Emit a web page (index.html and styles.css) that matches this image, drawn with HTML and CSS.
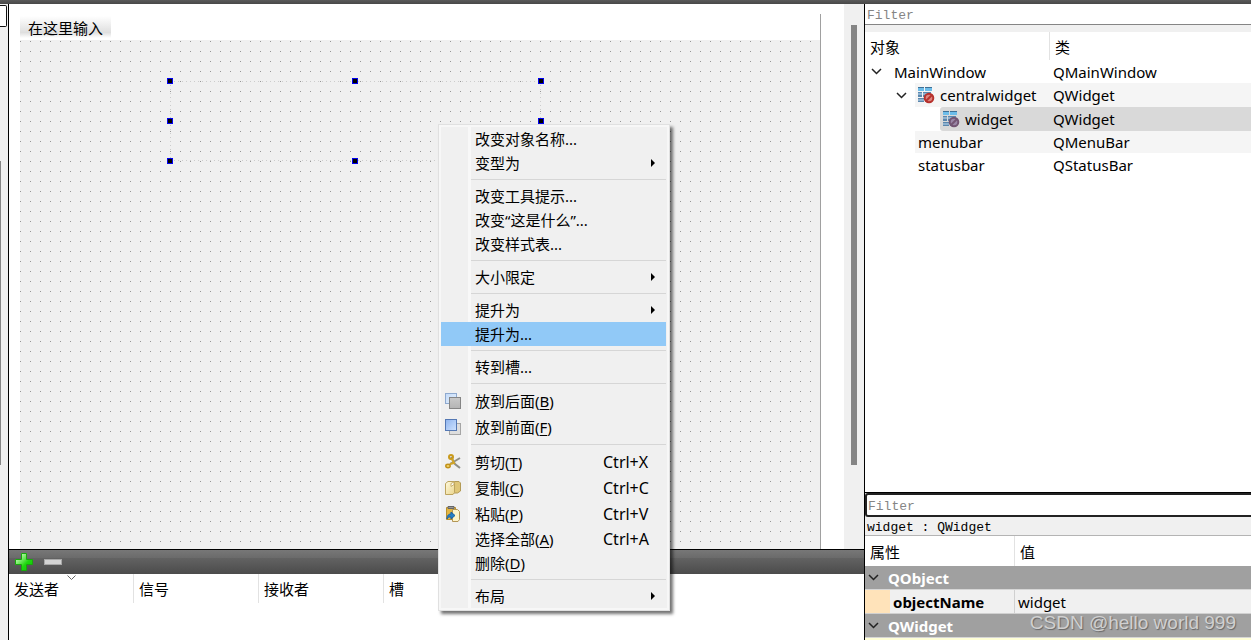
FILE: index.html
```html
<!DOCTYPE html>
<html lang="zh-CN">
<head>
<meta charset="utf-8">
<title>Qt Designer</title>
<link rel="stylesheet" href="styles.css">
</head>
<body>
<svg class="defs" aria-hidden="true">
  <defs>
    <linearGradient id="blue" x1="0" y1="0" x2="1" y2="1"><stop offset="0" stop-color="#8fb4ee"/><stop offset="1" stop-color="#cfe3ff"/></linearGradient>
    <linearGradient id="pale" x1="0" y1="0" x2="1" y2="1"><stop offset="0" stop-color="#c3daf8"/><stop offset="1" stop-color="#e6f1fd"/></linearGradient>
    <linearGradient id="gray" x1="0" y1="0" x2="0" y2="1"><stop offset="0" stop-color="#c9c9c9"/><stop offset="1" stop-color="#b4b4b4"/></linearGradient>
    <linearGradient id="green" x1="0" y1="0" x2="1" y2="1"><stop offset="0.2" stop-color="#b4f7a4"/><stop offset="0.6" stop-color="#1fd80f"/><stop offset="1" stop-color="#08c400"/></linearGradient>
    <linearGradient id="paper" x1="0" y1="0" x2="1" y2="1"><stop offset="0" stop-color="#fffbe0"/><stop offset="1" stop-color="#ead48c"/></linearGradient>
    <symbol id="chev" viewBox="0 0 11 7"><path d="M1 1l4.500 4.500L10 1" fill="none" stroke="#222" stroke-width="1.500"/></symbol>
    <symbol id="layout" viewBox="0 0 17 17">
      <path d="M0 0h6v4H0zM7 0h7v4H7zM0 5h4v5H0zM5 5h8v5H5zM0 11h6v4H0zM7 11h6v4H7z" fill="#5b87ad"/>
      <path d="M0 1h6v3H0zM7 1h7v3H7z" fill="#6dbdea"/>
      <path d="M0 0h6v1H0zM7 0h7v1H7z" fill="#3f7096"/>
      <path d="M0 6h4v2H0zM5 6h8v2H5zM0 12h6v2H0z" fill="#8fb2d0"/>
    </symbol>
  </defs>
</svg>
<div class="strip"></div>
<div class="workspace">
  <aside class="left-dock"><div class="left-box"></div><div class="left-edge"></div></aside>
  <main class="center">
    <section class="canvas">
      <div class="form">
        <nav class="menubar"><button class="menubar-item">在这里输入</button></nav>
        <div class="grid">
          <div class="selection">
            <i class="handle tl"></i><i class="handle tc"></i><i class="handle tr"></i>
            <i class="handle ml"></i><i class="handle mr"></i>
            <i class="handle bl"></i><i class="handle bc"></i><i class="handle br"></i>
          </div>
        </div>
      </div>
      <div class="scroll"><div class="thumb"></div></div>
    </section>
    <section class="signals">
      <div class="toolbar">
        <button class="tool" aria-label="添加"><svg width="18" height="18" viewBox="0 0 18 18"><path d="M6.500.500h5v6h6v5h-6v6h-5v-6h-6v-5h6z" fill="url(#green)" stroke="#18a80c"/></svg></button>
        <button class="tool" aria-label="删除"><svg width="20" height="18" viewBox="0 0 20 18"><rect x="1.500" y="6.500" width="17" height="5" fill="#d4d4d4" stroke="#a8a8a8"/></svg></button>
      </div>
      <table class="signal-table">
        <thead><tr><th>发送者<svg class="sort" width="9" height="6" viewBox="0 0 9 6"><path d="M.500.500l4 4 4-4" fill="none" stroke="#666"/></svg></th><th>信号</th><th>接收者</th><th>槽</th></tr></thead>
      </table>
    </section>
  </main>
  <aside class="right-dock">
    <section class="inspector">
      <input class="filter" type="text" placeholder="Filter" aria-label="筛选对象">
      <table class="tree">
        <thead><tr><th>对象</th><th class="second">类</th></tr></thead>
        <tbody>
          <tr><td><div class="node"><svg class="chev" width="11" height="7"><use href="#chev"/></svg><span>MainWindow</span></div></td><td>QMainWindow</td></tr>
          <tr class="alt tall"><td><div class="node level1"><svg class="chev" width="11" height="7"><use href="#chev"/></svg><div class="label"><svg width="17" height="17" viewBox="0 0 17 17"><use href="#layout"/><circle cx="11" cy="11" r="4.300" fill="#dc8580" stroke="#b7312c" stroke-width="2"/><path d="M8 14l6-6" stroke="#b7312c" stroke-width="2"/></svg>centralwidget</div></div></td><td>QWidget</td></tr>
          <tr class="selected tall"><td><div class="node level2"><div class="label"><svg width="17" height="17" viewBox="0 0 17 17"><use href="#layout"/><circle cx="11" cy="11" r="4.300" fill="#9a87a6" stroke="#735573" stroke-width="2"/><path d="M8 14l6-6" stroke="#735573" stroke-width="2"/></svg>widget</div></div></td><td>QWidget</td></tr>
          <tr class="alt short"><td><div class="node leaf"><div class="label">menubar</div></div></td><td>QMenuBar</td></tr>
          <tr><td><div class="node leaf"><div class="label">statusbar</div></div></td><td>QStatusBar</td></tr>
        </tbody>
      </table>
    </section>
    <section class="properties">
      <input class="filter framed" type="text" placeholder="Filter" aria-label="筛选属性">
      <div class="object-path">widget : QWidget</div>
      <table class="props">
        <thead><tr><th>属性</th><th class="second">值</th></tr></thead>
        <tbody>
          <tr class="group"><th colspan="2"><svg class="chev" width="11" height="7"><use href="#chev"/></svg>QObject</th></tr>
          <tr class="prop"><th>objectName</th><td>widget</td></tr>
          <tr class="group"><th colspan="2"><svg class="chev" width="11" height="7"><use href="#chev"/></svg>QWidget</th></tr>
          <tr class="yellow"><td></td><td></td></tr>
        </tbody>
      </table>
    </section>
  </aside>
</div>
<ul class="menu">
  <li><button>改变对象名称...</button></li>
  <li><button>变型为<i class="arrow"></i></button></li>
  <li class="sep"></li>
  <li><button>改变工具提示...</button></li>
  <li><button>改变“这是什么”...</button></li>
  <li><button>改变样式表...</button></li>
  <li class="sep"></li>
  <li><button>大小限定<i class="arrow"></i></button></li>
  <li class="sep"></li>
  <li><button>提升为<i class="arrow"></i></button></li>
  <li><button class="active">提升为...</button></li>
  <li class="sep"></li>
  <li><button>转到槽...</button></li>
  <li class="sep"></li>
  <li><button class="with-icon"><svg class="icon" width="16" height="16" viewBox="0 0 16 16"><rect x=".500" y=".500" width="11" height="10" fill="url(#pale)" stroke="#8ea9cf"/><rect x="4.500" y="4.500" width="11" height="11" fill="url(#gray)" stroke="#858585"/></svg><span>放到后面(<u>B</u>)</span></button></li>
  <li><button class="with-icon"><svg class="icon" width="16" height="16" viewBox="0 0 16 16"><rect x="4.500" y="4.500" width="11" height="11" fill="#dedede" stroke="#a5a5a5"/><rect x=".500" y=".500" width="11" height="11" fill="url(#blue)" stroke="#5478b4"/></svg><span>放到前面(<u>F</u>)</span></button></li>
  <li class="sep"></li>
  <li><button class="with-icon"><svg class="icon" width="16" height="16" viewBox="0 0 16 16"><path d="M6 3l4 7 5 4M5 10l10-6" fill="none" stroke="#8f8f86" stroke-width="2"/><circle cx="6" cy="3" r="2" fill="none" stroke="#c99a1c" stroke-width="2"/><path d="M7 5l2 4-4 1" fill="none" stroke="#d2a526" stroke-width="2"/><ellipse cx="3" cy="12" rx="2.200" ry="1.700" fill="#f0d26a" stroke="#c2921a" stroke-width="1.500"/></svg><span>剪切(<u>T</u>)</span><span class="key">Ctrl+X</span></button></li>
  <li><button class="with-icon"><svg class="icon" width="16" height="16" viewBox="0 0 16 16"><path d="M7 1.500h7l1.500 1.500v8l-3 2H7z" fill="#dfc677" stroke="#b39a55"/><path d="M.500 3.500L3 1.500h6.500v11l-1.500 2H.500z" fill="url(#paper)" stroke="#bda45e"/><path d="M6 3.500v3l3-2v-2.500z" fill="#fff" stroke="#c9b06a"/></svg><span>复制(<u>C</u>)</span><span class="key">Ctrl+C</span></button></li>
  <li><button class="with-icon"><svg class="icon" width="16" height="16" viewBox="0 0 16 16"><path d="M1.500 1.500h9v12h-9z" fill="#e3b642" stroke="#b98f2c"/><path d="M3 .500h6v2H3z" fill="#999" stroke="#666"/><path d="M7.500 3.500h5l2 2v8l-1.500 2H7.500z" fill="#fff4c9" stroke="#b39655"/><path d="M2 13c0-4 2-5 4-5V6l4 3.500L6 13v-2c-2 0-3 0-4 2z" fill="#277fc6" stroke="#1d62a0"/></svg><span>粘贴(<u>P</u>)</span><span class="key">Ctrl+V</span></button></li>
  <li><button><span>选择全部(<u>A</u>)</span><span class="key">Ctrl+A</span></button></li>
  <li><button><span>删除(<u>D</u>)</span></button></li>
  <li class="sep"></li>
  <li><button>布局<i class="arrow"></i></button></li>
</ul>
<div class="watermark">CSDN @hello world 999</div>
</body>
</html>
```
FILE: styles.css
```css
* { box-sizing: border-box; }
body {
  margin: 0;
  height: 100vh;
  display: flex;
  flex-direction: column;
  overflow: hidden;
  position: relative;
  background: #fff;
  color: #000;
  font-family: "Noto Sans", "Noto Sans CJK SC", sans-serif;
  font-size: 15px;
  line-height: 20px;
}
button, input { font: inherit; color: inherit; border: 0; padding: 0; background: none; }
table { border-collapse: separate; border-spacing: 0; table-layout: fixed; width: 100%; }
th, td { padding: 0; text-align: left; font-weight: 400; }
svg { display: block; }
.defs { position: absolute; width: 0; height: 0; }
.strip { flex: none; height: 4px; background: linear-gradient(#5a5a5a, #484848); }
.workspace { flex: 1; min-height: 0; display: flex; }

.left-dock { width: 9px; background: #f0f0f0; border-right: 1px solid #000; display: flex; flex-direction: column; }
.left-box { width: 7px; height: 22px; margin-top: 1px; background: #fff; border: 1px solid #111; border-left: 0; border-radius: 0 2px 2px 0; }
.left-edge { width: 1px; height: 304px; margin-top: 134px; background: #858585; }

.center { flex: 1; min-width: 0; display: flex; flex-direction: column; }
.canvas { flex: 1; display: flex; min-height: 0; padding-left: 11px; }
.form { flex: 1; margin: 10px 23px 0 0; border-right: 1px solid #a0a0a0; display: flex; flex-direction: column; }
.menubar { height: 26px; padding-top: 2px; }
.menubar-item { height: 22px; padding: 1px 8px 0; line-height: 18px; background: linear-gradient(#fff, #dfdfdf 75%, #fff); }
.grid {
  flex: 1;
  position: relative;
  background-color: #969696;
  background-image: linear-gradient(90deg, transparent 1px, #f0f0f0 1px), linear-gradient(transparent 1px, #f0f0f0 1px);
  background-size: 10px 10px;
  background-position: 0 1px;
}
.selection {
  position: absolute;
  left: 150px;
  top: 41px;
  width: 371px;
  height: 80px;
  background:
    repeating-linear-gradient(90deg, #ccc 0 1px, transparent 1px 4px) 0 0 / 100% 1px no-repeat,
    repeating-linear-gradient(90deg, #ccc 0 1px, transparent 1px 4px) 0 100% / 100% 1px no-repeat,
    repeating-linear-gradient(#ccc 0 1px, transparent 1px 4px) 0 0 / 1px 100% no-repeat,
    repeating-linear-gradient(#ccc 0 1px, transparent 1px 4px) 100% 0 / 1px 100% no-repeat;
}
.handle { position: absolute; width: 6px; height: 6px; background: #000; border: 1px solid #0000f0; }
.tl, .tc, .tr { top: -3px; }
.ml, .mr { top: 37px; }
.bl, .bc, .br { bottom: -3px; }
.tl, .ml, .bl { left: -3px; }
.tc, .bc { left: 182px; }
.tr, .mr, .br { right: -3px; }
.scroll { width: 20px; background: #f0f0f0; padding: 21px 7px 0; }
.thumb { height: 440px; background: #858585; }

.signals { height: 91px; border-top: 1px solid #000; }
.toolbar { height: 24px; padding-left: 6px; display: flex; align-items: center; gap: 10px; background: linear-gradient(#777, #6a6a6a 35%, #626262 35%, #4b4b4b); }
.signal-table th { width: 125px; height: 29px; padding: 0 0 0 5px; border-right: 1px solid #e2e2e2; position: relative; }
.signal-table th:last-child { width: auto; border-right: 0; }
.sort { position: absolute; left: 58px; top: 1px; }

.right-dock { width: 387px; border-left: 1px solid #000; display: flex; flex-direction: column; background: #f0f0f0; }
.inspector { flex: 1; background: #fff; }
.filter { display: block; width: 100%; height: 21px; padding: 2px 2px 0; background: #fff; border-bottom: 1px solid #858585; font-family: "Liberation Mono", monospace; font-size: 13px; line-height: 18px; }
.filter::placeholder { color: #858585; opacity: 1; }
.tree { border-top: 7px solid #f0f0f0; }
.tree thead th { height: 28px; padding: 2px 0 0 5px; width: 185px; border-right: 1px solid #e2e2e2; }
.tree thead .second { width: auto; border: 0; }
.tree td { height: 23px; }
.tree .tall td { height: 24px; }
.tree .short td { height: 22px; }
.tree td:last-child { padding-left: 3px; }
.node { height: 23px; padding-left: 6px; display: flex; align-items: center; gap: 12px; }
.tall .node { height: 24px; }
.short .node { height: 22px; }
.label { flex: 1; align-self: stretch; display: flex; align-items: center; gap: 5px; padding-left: 3px; }
.level1 { padding-left: 31px; gap: 8px; }
.level2 { padding-left: 75px; }
.leaf { padding-left: 50px; }
.alt .label, .alt td:last-child { background: #f5f5f5; }
.selected .label, .selected td:last-child { background: #d9d9d9; }
.selected .label { border-radius: 3px 0 0 3px; }

.properties { flex: none; height: 148px; border-top: 1px solid #000; }
.framed { height: 24px; border: 2px solid #222; border-right: 0; border-radius: 3px 0 0 3px; padding: 2px 1px 0; }
.object-path { height: 19px; padding: 0 2px; border-bottom: 1px solid #b4b4b4; font-family: "Liberation Mono", monospace; font-size: 13px; line-height: 21px; }
.props { background: #fff; }
.props thead th { height: 30px; padding: 2px 0 0 5px; width: 150px; border-right: 1px solid #e2e2e2; }
.props thead .second { width: auto; border: 0; }
.group th { height: 24px; background: #a0a0a0; color: #fff; font-weight: 700; border-bottom: 1px solid #d6d6d6; }
.group .chev { display: inline-block; margin: 0 9px 3px 3px; }
.prop th { height: 24px; padding-left: 28px; font-weight: 700; background: linear-gradient(90deg, #ffe3ba 25px, #f0f0f0 25px); border-right: 1px solid #d0d0d0; border-bottom: 1px solid #d0d0d0; }
.prop td { padding-left: 3px; background: #f0f0f0; border-bottom: 1px solid #d0d0d0; }
.yellow td { height: 3px; background: #ffffd6; }

.menu {
  position: absolute;
  left: 438px;
  top: 124px;
  width: 232px;
  margin: 0;
  padding: 2px 3px 2px 2px;
  list-style: none;
  border: 1px solid #e0e0e0;
  background: linear-gradient(90deg, #f0f0f0 29px, #f8f8f8 29px 32px, #f0f0f0 32px);
  box-shadow: inset 0 0 0 2px #f7f7f7, 3px 3px 3px rgba(0, 0, 0, .55);
}
.menu button { position: relative; display: flex; align-items: center; width: 100%; height: 24px; padding: 0 11px 0 34px; text-align: left; }
.menu .with-icon { height: 26px; padding-left: 4px; }
.icon { margin-right: 14px; }
.menu .active { background: #91c9f7; }
.menu .sep { height: 9px; border-top: 4px solid transparent; border-bottom: 4px solid transparent; margin-left: 30px; background: #d6d6d6; background-clip: padding-box; }
.menu u { text-underline-offset: 2px; }
.key { position: absolute; left: 162px; font-size: 16px; }
.arrow { margin-left: auto; border: 4px solid transparent; border-left-color: #000; border-right: 0; }

.watermark { position: absolute; right: 15px; bottom: 6px; color: #d0d0d0; font-family: "Liberation Sans", Arial, sans-serif; font-size: 19px; line-height: 22px; text-shadow: 1px 1px 1px #666; }
```
